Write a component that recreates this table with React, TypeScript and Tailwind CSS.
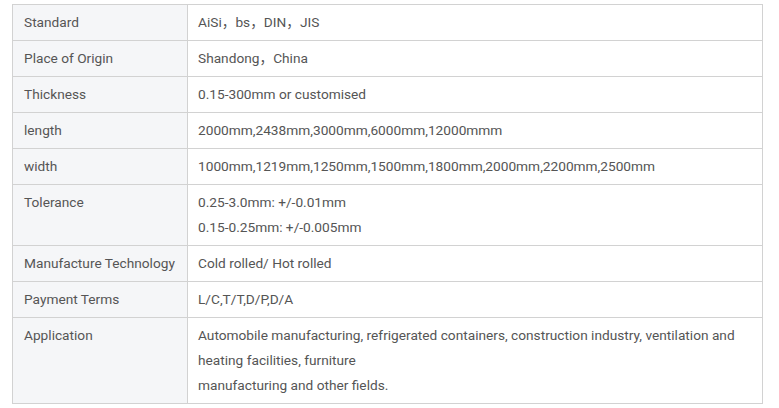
const rows: { label: string; value: string[] }[] = [
  { label: 'Standard', value: ['AiSi，bs，DIN，JIS'] },
  { label: 'Place of Origin', value: ['Shandong，China'] },
  { label: 'Thickness', value: ['0.15-300mm or customised'] },
  { label: 'length', value: ['2000mm,2438mm,3000mm,6000mm,12000mmm'] },
  { label: 'width', value: ['1000mm,1219mm,1250mm,1500mm,1800mm,2000mm,2200mm,2500mm'] },
  { label: 'Tolerance', value: ['0.25-3.0mm: +/-0.01mm', '0.15-0.25mm: +/-0.005mm'] },
  { label: 'Manufacture Technology', value: ['Cold rolled/ Hot rolled'] },
  { label: 'Payment Terms', value: ['L/C,T/T,D/P,D/A'] },
  {
    label: 'Application',
    value: [
      'Automobile manufacturing, refrigerated containers, construction industry, ventilation and',
      'heating facilities, furniture',
      'manufacturing and other fields.',
    ],
  },
]

export default function App() {
  return (
    <div className="h-[408px] w-[779px] bg-white pl-[12px] pt-[4px] font-['Roboto','Noto_Sans_CJK_SC',sans-serif] text-[13.7px] leading-[25px] text-[#555]">
      <table className="w-[751px] border-collapse">
        <tbody>
          {rows.map((row) => (
            <tr key={row.label}>
              <td className="w-[175px] border border-[#d2d2d2] bg-[#f5f6f8] px-[11px] py-[5px] align-top">
                {row.label}
              </td>
              <td className="border border-[#d2d2d2] px-[10px] py-[5px] align-top">
                {row.value.map((line, i) => (
                  <div key={i} className="whitespace-nowrap">
                    {line}
                  </div>
                ))}
              </td>
            </tr>
          ))}
        </tbody>
      </table>
    </div>
  )
}
